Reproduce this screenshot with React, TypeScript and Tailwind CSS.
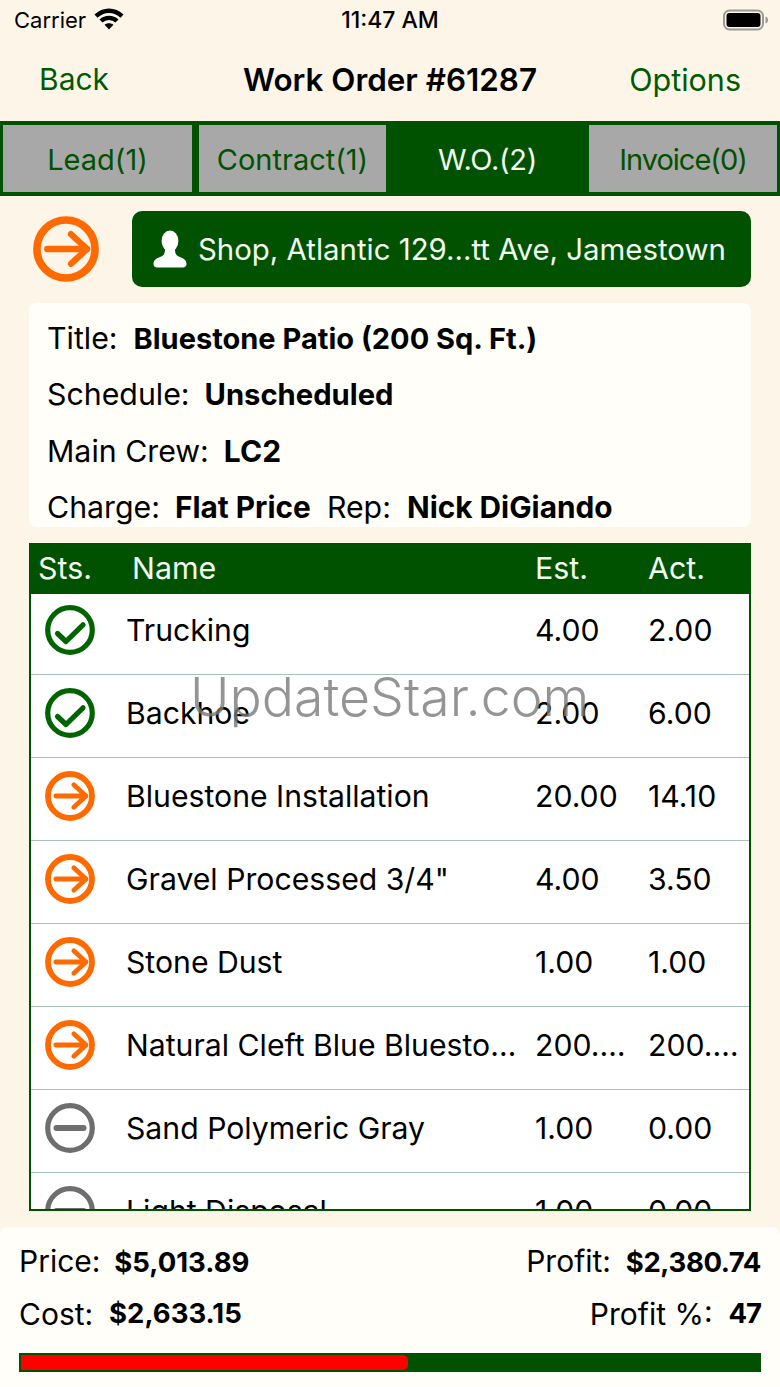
import React from "react";

function Wifi() {
  return (
    <svg width="30" height="22" viewBox="0 0 30 22" className="ml-[8px] -mt-[3px]" fill="none">
      <path d="M2 8.2C9.5 1 20.5 1 28 8.2" stroke="#000" strokeWidth="4.4" />
      <path d="M7 13C11.5 8.8 18.5 8.8 23 13" stroke="#000" strokeWidth="4.4" />
      <path d="M15 21.5L10.6 16.7C13 14.7 17 14.7 19.4 16.7Z" fill="#000" />
    </svg>
  );
}

function Battery() {
  return (
    <svg width="46" height="22" viewBox="0 0 46 22">
      <rect x="1" y="1.5" width="39" height="19" rx="5.5" fill="none" stroke="#9a9a92" strokeWidth="2" />
      <rect x="3.5" y="4" width="34" height="14" rx="3" fill="#000" />
      <path d="M42.5 7.5C44.5 8 45 9.5 45 11S44.5 14 42.5 14.5Z" fill="#9a9a92" />
    </svg>
  );
}

function ArrowIcon({ size = 50 }: { size?: number }) {
  return (
    <svg width={size} height={size} viewBox="0 0 50 50" fill="none" stroke="#ff6a00">
      <circle cx="25" cy="25" r="22" strokeWidth="5.8" />
      <path d="M10.8 25H41M28.8 13.8L41 25L28.8 36.2" strokeWidth="4.8" strokeLinecap="round" strokeLinejoin="round" />
    </svg>
  );
}

function CheckIcon() {
  return (
    <svg width="50" height="50" viewBox="0 0 50 50" fill="none" stroke="#006400">
      <circle cx="25" cy="25" r="22.3" strokeWidth="5.2" />
      <path d="M12.5 28.5L21 36.5L38 19.8" strokeWidth="5.2" strokeLinecap="round" strokeLinejoin="round" />
    </svg>
  );
}

function MinusIcon() {
  return (
    <svg width="50" height="50" viewBox="0 0 50 50" fill="none" stroke="#6e6e6e">
      <circle cx="25" cy="25" r="22.3" strokeWidth="5.2" />
      <path d="M11.5 25H38.5" strokeWidth="6" strokeLinecap="round" />
    </svg>
  );
}

function Person() {
  return (
    <svg width="34" height="38" viewBox="0 0 34 38" fill="#fff">
      <ellipse cx="17" cy="11" rx="8.4" ry="10.5" />
      <path d="M12 19H22C22 25 24 26 28 27.5C32 29 33.5 31 33.5 34C33.5 37 31 37.5 28 37.5H6C3 37.5 .5 37 .5 34C.5 31 2 29 6 27.5C10 26 12 25 12 19Z" />
    </svg>
  );
}

const rows: [string, string, string, string][] = [
  ["c", "Trucking", "4.00", "2.00"],
  ["c", "Backhoe", "2.00", "6.00"],
  ["a", "Bluestone Installation", "20.00", "14.10"],
  ["a", 'Gravel Processed 3/4"', "4.00", "3.50"],
  ["a", "Stone Dust", "1.00", "1.00"],
  ["a", "Natural Cleft Blue Bluesto…", "200.…", "200.…"],
  ["m", "Sand Polymeric Gray", "1.00", "0.00"],
  ["m", "Light Disposal", "1.00", "0.00"],
];

function Tab({ label, w, active, extra }: { label: string; w: string; active?: boolean; extra?: string }) {
  return (
    <div
      className={`${w} h-full flex items-center justify-center pt-[3px] text-[29px] ${extra ?? ""} ${
        active ? "bg-[#005200] text-[#f4fbf0]" : "bg-[#a8a8a8] text-[#005200]"
      }`}
    >
      {label}
    </div>
  );
}

function Info({ children }: { children: React.ReactNode }) {
  return <div className="h-[56.5px] shrink-0 flex items-center whitespace-pre text-[30.3px]">{children}</div>;
}

export default function App() {
  return (
    <div
      className="relative w-[780px] h-[1387px] overflow-hidden bg-[#fdf6e8] text-black flex flex-col"
      style={{ fontFamily: "Inter, 'Liberation Sans', sans-serif" }}
    >
      {/* status bar */}
      <div className="h-[40px] flex items-center justify-between pl-[14px] pr-[5px] shrink-0">
        <div className="flex items-center w-[200px] text-[22px]">
          <span>Carrier</span>
          <Wifi />
        </div>
        <span className="font-medium text-[23px]">11:47 AM</span>
        <div className="w-[209px] flex justify-end pr-[6px]">
          <Battery />
        </div>
      </div>

      {/* nav */}
      <div className="h-[81px] flex items-center justify-between px-[39px] shrink-0 text-[30.5px] text-[#005a00]">
        <span className="w-[160px] -mt-[2px] text-[30px]">Back</span>
        <span className="font-semibold text-black text-[31.4px]">Work Order #61287</span>
        <span className="w-[160px] -mt-[2px] text-right">Options</span>
      </div>

      {/* tabs */}
      <div className="h-[75px] bg-[#005200] p-[4px_3px] flex shrink-0 gap-[7px]">
        <Tab label="Lead(1)" w="w-[189px]" />
        <Tab label="Contract(1)" w="w-[187px]" />
        <Tab label="W.O.(2)" w="w-[189px]" active extra="tracking-[-0.3px]" />
        <Tab label="Invoice(0)" w="w-[188px]" extra="tracking-[-1px]" />
      </div>

      {/* customer */}
      <div className="h-[76px] mt-[15px] flex shrink-0 items-center">
        <div className="ml-[33px] w-[66px]">
          <ArrowIcon size={66} />
        </div>
        <div className="ml-[33px] w-[619px] h-full rounded-[10px] bg-[#005200] text-[#f4fbf0] flex items-center pl-[21px] gap-[11px]">
          <Person />
          <span className="whitespace-nowrap text-[29.4px] pt-[3px]">Shop, Atlantic 129…tt Ave, Jamestown</span>
        </div>
      </div>

      {/* info card */}
      <div className="mx-[29px] mt-[16px] h-[224px] bg-[#fffef9] rounded-[8px] pl-[18px] pt-[7px] shrink-0 overflow-hidden flex flex-col">
        <Info>
          Title:  <b className="text-[29px] -ml-[1px]">Bluestone Patio (200 Sq. Ft.)</b>
        </Info>
        <Info>
          Schedule:  <b className="text-[29.2px] -ml-[2px]">Unscheduled</b>
        </Info>
        <Info>
          Main Crew:  <b className="text-[30px] -ml-[2px]">LC2</b>
        </Info>
        <Info>
          Charge:  <b className="text-[29.8px] -ml-[2px]">Flat Price</b>
          <span className="-ml-[1px]">  Rep:  </span>
          <b className="text-[29.8px] -ml-[1px]">Nick DiGiando</b>
        </Info>
      </div>

      {/* table */}
      <div className="mx-[29px] mt-[16px] h-[668px] border-x-2 border-b-2 border-[#005200] bg-white overflow-hidden shrink-0 flex flex-col text-[30.2px]">
        <div className="relative z-10 h-[51px] bg-[#005200] text-[#f4fbf0] flex items-center text-[30.4px] shrink-0">
          <span className="w-[101px] pl-[7px]">Sts.</span>
          <span className="w-[403px]">Name</span>
          <span className="w-[113px]">Est.</span>
          <span>Act.</span>
        </div>
        <div className="-mt-[2px] flex flex-col">
          {rows.map((r) => (
            <div key={r[1]} className="h-[83px] shrink-0 flex items-center border-b border-[#a9c4b4] pb-[5px]">
              <div className="w-[95px] pl-[14px] pb-[2px] shrink-0 flex">
                {r[0] === "c" ? <CheckIcon /> : r[0] === "a" ? <ArrowIcon /> : <MinusIcon />}
              </div>
              <span className="w-[409px] whitespace-nowrap">{r[1]}</span>
              <span className="w-[113px]">{r[2]}</span>
              <span>{r[3]}</span>
            </div>
          ))}
        </div>
      </div>

      {/* totals */}
      <div className="mt-[16px] flex-1 bg-[#fffef9] rounded-t-[8px] px-[19px] text-[30px] flex flex-col">
        <div className="h-[52px] mt-[8px] flex items-center justify-between whitespace-pre">
          <span>
            Price:  <b className="text-[27.5px] -ml-[3px]">$5,013.89</b>
          </span>
          <span>
            Profit:  <b className="text-[27.5px] -ml-[2px] tracking-[-0.4px]">$2,380.74</b>
          </span>
        </div>
        <div className="h-[52px] mt-[1px] flex items-center justify-between whitespace-pre">
          <span>
            Cost:  <b className="inline-block text-[27.5px] -ml-[1px] -translate-y-[2px]">$2,633.15</b>
          </span>
          <span>
            Profit %:  <b className="inline-block text-[27.5px] -ml-[1px] tracking-[-1px] -translate-y-[2px]">47</b>
          </span>
        </div>
        <div className="mt-[13px] h-[19px] bg-[#005200] flex items-stretch p-[2px]">
          <div className="w-[387px] bg-[#ff0000] rounded-r-[5px]" />
        </div>
      </div>

      {/* watermark */}
      <div className="absolute left-[190px] top-[664px] text-[53.6px] leading-[66px] text-[#7a7a7a] opacity-80 whitespace-nowrap pointer-events-none font-light">
        UpdateStar.com
      </div>
    </div>
  );
}
